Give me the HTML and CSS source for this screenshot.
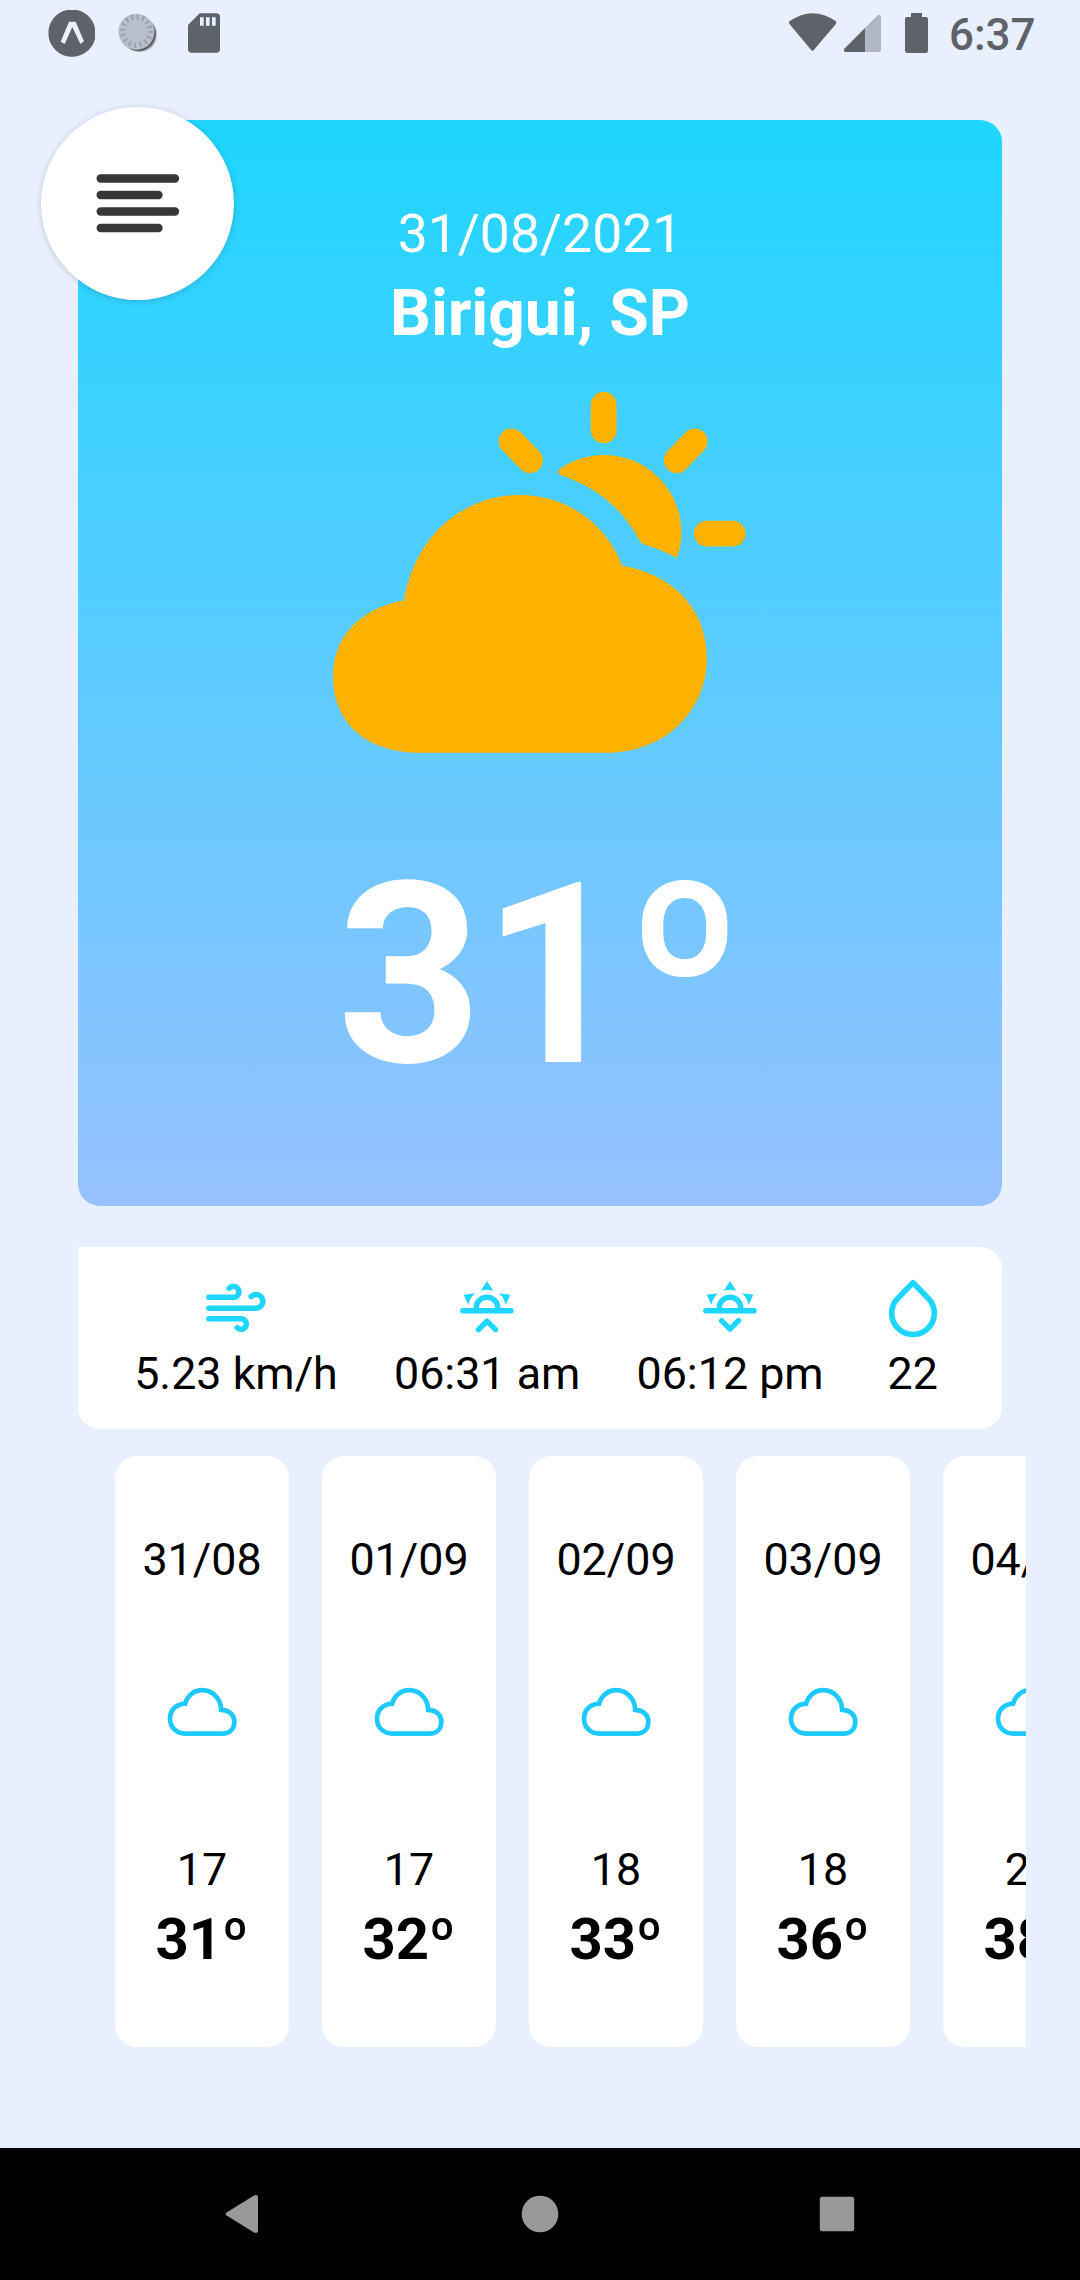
FILE: index.html
```html
<!DOCTYPE html>
<html lang="pt-BR">
<head>
<meta charset="utf-8">
<title>Birigui, SP</title>
<link rel="stylesheet" href="styles.css">
</head>
<body>
<svg class="defs" aria-hidden="true">
  <symbol id="cloud" viewBox="199 738 216 156">
    <path d="M257 881H368C390 881 404 867 404 845C404 825 388 810 364.500 809.500C364 776 339 750.500 307 750.500C284 750.500 263 766 256.500 791C230 792 211 810 211 836C211 862 231 881 257 881Z" fill="none" stroke="#1ec9ff" stroke-width="14"/>
  </symbol>
  <symbol id="sun-horizon" viewBox="1188 138 198 198">
    <path d="M1214.500 242H1359M1254.500 240V234a32.500 32.500 0 0 1 65 0V240" fill="none" stroke="#1ed6ff" stroke-width="16.500" stroke-linecap="round"/>
    <path d="M1287 153L1306 183Q1287 175 1268 183ZM1217 194L1251 190Q1236 203 1231 225ZM1357 194L1323 190Q1338 203 1343 225Z" fill="#1ed6ff"/>
  </symbol>
</svg>
<div class="screen">
  <header class="status">
    <svg class="st-expo" viewBox="138 0 153 198"><path d="M200 30H232A71 71 0 0 1 285 84V116A71 71 0 1 1 200 30Z" fill="#5f6269"/><path d="M207 65H227L252 124L241 132L217 81L194 132L182 125Z" fill="#e8f0ff"/></svg>
    <svg class="st-seal" viewBox="351 0 126 198"><circle cx="420" cy="105" r="52" fill="#c5cbd7"/><circle cx="416" cy="102" r="52" fill="#5f6269"/><circle cx="409" cy="95" r="54" fill="#b9c0cd"/><circle cx="409" cy="93" r="42" fill="none" stroke="#9ba1ad" stroke-width="16" stroke-dasharray="6 10.490"/></svg>
    <svg class="st-sd" viewBox="558 0 108 198"><path d="M599 40H649Q660 40 660 51V147Q660 158 649 158H575Q564 158 564 147V75Z" fill="#5f6269"/><path d="M600 52H611V77H600ZM618 52H629V77H618ZM636 52H647V77H636Z" fill="#e8f0ff"/></svg>
    <svg class="st-wifi" viewBox="81 0 153 198"><path d="M88 64Q158 15 228 64Q231 67 227 73L162 149Q158 155 153 149L89 73Q85 67 88 64Z" fill="#5f6269"/></svg>
    <svg class="st-signal" viewBox="246 0 123 198"><path d="M315 84L353 46Q363 41 363 51V150Q363 156 357 156H315Z" fill="#b0b6c3"/><path d="M315 84V156H256Q249 153 253 146Z" fill="#5f6269"/></svg>
    <svg class="st-battery" viewBox="429 0 81 198"><path d="M453 39H486V51H498Q504 51 504 57V152Q504 159 497 159H442Q435 159 435 152V57Q435 51 441 51H453Z" fill="#5f6269"/></svg>
    <time class="clock">6:37</time>
  </header>

  <button class="menu" aria-label="Menu">
    <svg viewBox="275 509 275 200"><path d="M301 534.500H524M301 584H474.500M301 633.500H524M301 683H474.500" stroke="#373737" stroke-width="25" stroke-linecap="round"/></svg>
  </button>

  <main>
    <section class="today">
      <p class="date">31/08/2021</p>
      <h1 class="city">Birigui, SP</h1>
      <svg class="weather" viewBox="0 0 512 512" fill="#ffb300">
        <path d="M340 480H106c-29.500 0-54.920-7.830-73.530-22.640C11.230 440.440 0 415.350 0 384.800c0-26.660 10.080-49.800 29.140-66.910 15.240-13.680 36.170-23.210 59-26.840.06 0 .08 0 .09-.05 6.440-39 23.830-72.090 50.310-95.680A140.240 140.240 0 0 1 232 160c30.230 0 58.480 9.390 81.710 27.170a142.240 142.240 0 0 1 45.360 60.660c29.410 4.820 54.720 17.110 73.190 35.540C453 304.110 464 331.710 464 363.200c0 32.850-13.130 62.870-37 84.520C404.110 468.540 373.200 480 340 480Z"/>
        <path d="M281 128A96 96 0 0 1 428 235Q427 239 423 236Q405 227 387 222Q382 220 379 214C358 175 323 148 281 135Q278 131 281 128Z"/>
        <path d="M336 48V80M464 208H496M221.500 93.500L244.500 117M449 93.500L426.500 117" stroke="#ffb300" stroke-width="32" stroke-linecap="round"/>
      </svg>
      <p class="temp">31º</p>
    </section>

    <section class="info">
      <div class="stat">
        <svg viewBox="429.500 138 198 198"><path d="M447 202H520a16.500 16.500 0 1 0-12-27M447 234.500H589a20.500 20.500 0 1 0-15-35M447 266H545a16 16 0 1 1-13 27" fill="none" stroke="#1ed6ff" stroke-width="16.500" stroke-linecap="round"/></svg>
        <span>5.23 km/h</span>
      </div>
      <div class="stat">
        <svg viewBox="1188 138 198 198"><use href="#sun-horizon" x="1188" y="138" width="198" height="198"/><path d="M1261.500 299L1287 273.500L1312.500 299" fill="none" stroke="#1ed6ff" stroke-width="16.500" stroke-linecap="round" stroke-linejoin="round"/></svg>
        <span>06:31 am</span>
      </div>
      <div class="stat">
        <svg viewBox="1188 138 198 198"><use href="#sun-horizon" x="1188" y="138" width="198" height="198"/><path d="M1261.500 272L1287 297.500L1312.500 272" fill="none" stroke="#1ed6ff" stroke-width="16.500" stroke-linecap="round" stroke-linejoin="round"/></svg>
        <span>06:12 pm</span>
      </div>
      <div class="stat">
        <svg viewBox="1020 138 198 198"><path d="M1119 158.500L1164.500 204.500a64 64 0 1 1-91 0Z" fill="none" stroke="#1ed6ff" stroke-width="17" stroke-linejoin="round"/></svg>
        <span>22</span>
      </div>
    </section>

    <section class="forecast">
      <article class="day"><span class="d">31/08</span><svg><use href="#cloud"/></svg><span class="min">17</span><b>31º</b></article>
      <article class="day"><span class="d">01/09</span><svg><use href="#cloud"/></svg><span class="min">17</span><b>32º</b></article>
      <article class="day"><span class="d">02/09</span><svg><use href="#cloud"/></svg><span class="min">18</span><b>33º</b></article>
      <article class="day"><span class="d">03/09</span><svg><use href="#cloud"/></svg><span class="min">18</span><b>36º</b></article>
      <article class="day"><span class="d">04/09</span><svg><use href="#cloud"/></svg><span class="min">20</span><b>38º</b></article>
    </section>
  </main>

  <nav class="navbar">
    <svg viewBox="0 0 40 40"><path d="M3.500 18.500L31 1.500Q35 0 35 3.500V36.500Q35 40 31 38.500L3.500 21.500Q2 20 3.500 18.500Z" fill="#999"/></svg>
    <svg viewBox="0 0 40 40"><circle cx="20" cy="20" r="18.300" fill="#999"/></svg>
    <svg viewBox="0 0 40 40"><rect x="2.800" y="2.800" width="34.400" height="34.400" rx="2.500" fill="#999"/></svg>
  </nav>
</div>
</body>
</html>
```
FILE: styles.css
```css
* { box-sizing: border-box; }

body {
  margin: 0;
  background: #e8f0ff;
  color: #000;
  font-family: Roboto, "Liberation Sans", sans-serif;
}

p, h1 { margin: 0; }

svg { display: block; flex: none; }

.defs { position: absolute; width: 0; height: 0; }

.screen {
  position: relative;
  display: flex;
  flex-direction: column;
  width: 1080px;
  height: 2280px;
  overflow: hidden;
}

/* status bar */
.status {
  display: flex;
  height: 120px;
  padding: 0 44px 0 46px;
}
.status svg { height: 66px; }
.st-expo { width: 51px; }
.st-seal { width: 42px; margin-left: 20px; }
.st-sd { width: 36px; margin-left: 27px; }
.st-wifi { width: 51px; margin-left: auto; }
.st-signal { width: 41px; margin-left: 4px; }
.st-battery { width: 27px; margin-left: 20px; }
.clock {
  width: 87px;
  margin-left: 19px;
  color: #5f6269;
  font-size: 44px;
  font-weight: 500;
  line-height: 70px;
  white-space: nowrap;
}

/* floating drawer button */
.menu {
  position: absolute;
  top: 107px;
  left: 41px;
  display: flex;
  align-items: center;
  justify-content: center;
  width: 193px;
  height: 193px;
  padding: 0;
  border: 0;
  border-radius: 50%;
  background: #fff;
  box-shadow: 0 1px 6px rgba(0, 0, 0, .18);
}
.menu svg { width: 91.67px; height: 66.67px; }

main { flex: 1; }

/* current conditions */
.today {
  display: flex;
  flex-direction: column;
  align-items: center;
  width: 924px;
  height: 1086px;
  margin: 0 auto;
  padding-top: 81px;
  border-radius: 22px;
  background: linear-gradient(#1ed6ff, #97c1ff);
  color: #fff;
}
.date { font-size: 53.5px; line-height: 65px; }
.city { margin-top: 9px; font-size: 64px; font-weight: 700; line-height: 78px; }
.weather { width: 412.5px; height: 412.5px; margin: 13px 1.5px 0 0; }
.temp { margin-top: 47px; font-size: 253px; font-weight: 700; line-height: 300px; }

/* wind, sunrise, sunset, humidity */
.info {
  display: flex;
  justify-content: space-evenly;
  width: 924px;
  height: 182px;
  margin: 41px auto 0;
  padding-top: 29px;
  border-radius: 0 22px 22px 22px;
  background: #fff;
}
.stat {
  display: flex;
  flex-direction: column;
  align-items: center;
  gap: 6px;
  font-size: 44.8px;
  line-height: 52px;
  white-space: nowrap;
}
.stat svg { width: 66px; height: 66px; }

/* daily forecast strip */
.forecast {
  display: flex;
  gap: 33px;
  width: 972px;
  margin: 27px 0 0 54px;
  padding-left: 61px;
  overflow: hidden;
}
.day {
  display: flex;
  flex: none;
  flex-direction: column;
  align-items: center;
  width: 174px;
  height: 591px;
  padding-top: 78px;
  border-radius: 22px;
  background: #fff;
  font-size: 44.8px;
  line-height: 52px;
}
.day svg { width: 72px; height: 52px; margin: 100px 0 106px; }
.day b { margin-top: 9px; font-size: 58px; line-height: 68px; }

/* system navigation */
.navbar {
  display: flex;
  align-items: center;
  justify-content: center;
  gap: 257px;
  height: 132px;
  background: #000;
}
.navbar svg { width: 40px; height: 40px; }
```
